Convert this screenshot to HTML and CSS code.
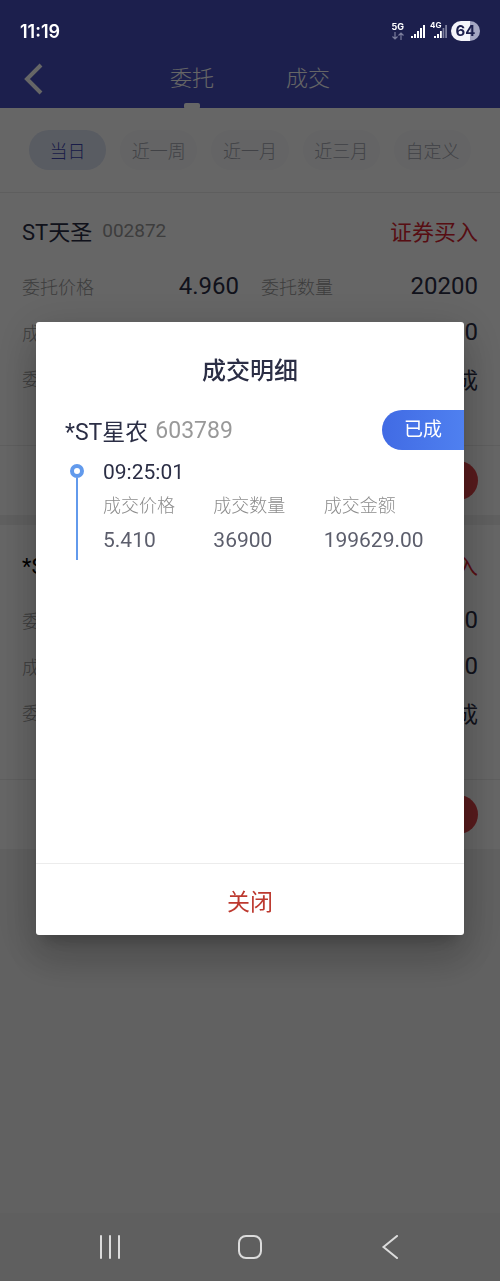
FILE: index.html
```html
<!DOCTYPE html>
<html lang="zh-CN">
<head>
<meta charset="utf-8">
<meta name="viewport" content="width=device-width, initial-scale=1">
<title>成交明细</title>
<link rel="stylesheet" href="styles.css">
</head>
<body>
<div class="page">
  <header class="topbar">
    <button class="back" type="button" aria-label="返回">
      <svg width="20" height="32" viewBox="0 0 20 32"><path d="M17 2 3 16l14 14" fill="none" stroke="currentColor" stroke-width="4"/></svg>
    </button>
    <nav class="tabs">
      <a class="tab tab-active" href="#orders">委托</a>
      <a class="tab" href="#deals">成交</a>
    </nav>
  </header>

  <div class="ranges">
    <button class="chip chip-active" type="button">当日</button>
    <button class="chip" type="button">近一周</button>
    <button class="chip" type="button">近一月</button>
    <button class="chip" type="button">近三月</button>
    <button class="chip" type="button">自定义</button>
  </div>

  <main>
    <article class="order">
      <div class="order-head"><span class="name">ST天圣</span><span class="code">002872</span><span class="side">证券买入</span></div>
      <dl class="facts">
        <div class="fact"><dt>委托价格</dt><dd>4.960</dd></div>
        <div class="fact"><dt>委托数量</dt><dd>20200</dd></div>
        <div class="fact"><dt>成交价格</dt><dd>4.960</dd></div>
        <div class="fact"><dt>成交数量</dt><dd>20200</dd></div>
        <div class="fact fact-wide"><dt>委托状态</dt><dd class="state">已成</dd></div>
      </dl>
      <div class="order-foot"><button class="detail" type="button">明细</button></div>
    </article>
    <article class="order">
      <div class="order-head"><span class="name name-strong">*ST星农</span><span class="code">603789</span><span class="side">证券买入</span></div>
      <dl class="facts">
        <div class="fact"><dt>委托价格</dt><dd>5.410</dd></div>
        <div class="fact"><dt>委托数量</dt><dd>36900</dd></div>
        <div class="fact"><dt>成交价格</dt><dd>5.410</dd></div>
        <div class="fact"><dt>成交数量</dt><dd>36900</dd></div>
        <div class="fact fact-wide"><dt>委托状态</dt><dd class="state">已成</dd></div>
      </dl>
      <div class="order-foot"><button class="detail" type="button">明细</button></div>
    </article>
  </main>
</div>

<div class="overlay">
  <section class="dialog" role="dialog" aria-modal="true" aria-labelledby="dialog-title">
    <h1 class="dialog-title" id="dialog-title">成交明细</h1>
    <div class="dialog-body">
      <div class="stock"><span class="stock-name">*ST星农</span><span class="stock-code">603789</span><span class="badge">已成</span></div>
      <div class="deal">
        <div class="rail"><span class="dot"></span><span class="line"></span></div>
        <div class="deal-info">
          <time class="time">09:25:01</time>
          <dl class="deal-grid">
            <div><dt>成交价格</dt><dd>5.410</dd></div>
            <div><dt>成交数量</dt><dd>36900</dd></div>
            <div><dt>成交金额</dt><dd>199629.00</dd></div>
          </dl>
        </div>
      </div>
    </div>
    <button class="close" type="button">关闭</button>
  </section>
</div>

<div class="status">
  <span class="clock">11:19</span>
  <span class="net">
    <span class="net-label">5G</span>
    <svg width="12" height="8" viewBox="0 0 12 8"><path d="M3 0v7M0.500 4.500 3 7l2.500-2.500M9 8V1M6.500 3.500 9 1l2.500 2.500" fill="none" stroke="#7b7d9c" stroke-width="1.200"/></svg>
  </span>
  <svg class="bars" width="14" height="14" viewBox="0 0 14 14" fill="#fff"><path d="M0 12h2v2H0zM3 10h2v4H3zM6 7h2v7H6zM9 4h2v10H9zM12 1h2v13h-2z"/></svg>
  <span class="second">
    <svg width="17" height="14" viewBox="0 0 17 14"><path d="M4 12h2v2H4zM7 10h2v4H7zM10 7h1.800v7H10z" fill="#fff"/><path d="M12.600 4h1.700v10h-1.700zM15.200 1H17v13h-1.800z" fill="#7b7d9c"/></svg>
    <span class="second-label">4G</span>
  </span>
  <span class="battery">64</span>
</div>

<nav class="sysnav">
  <button type="button" aria-label="最近任务"><svg width="24" height="24" viewBox="0 0 24 24"><path d="M3 1v22M12 1v22M21 1v22"/></svg></button>
  <button type="button" aria-label="主屏幕"><svg width="24" height="24" viewBox="0 0 24 24"><rect x="1" y="1" width="22" height="22" rx="7"/></svg></button>
  <button type="button" aria-label="返回上一页"><svg width="24" height="24" viewBox="0 0 24 24"><path d="M19 1 5.500 12 19 23"/></svg></button>
</nav>
</body>
</html>
```

FILE: styles.css
```css
* { box-sizing: border-box; }

body {
  margin: 0;
  background: #f2f2f2;
  color: #2b2e45;
  font-family: Roboto, "Noto Sans CJK SC", sans-serif;
  font-size: 18px;
}

button {
  margin: 0;
  padding: 0;
  border: 0;
  background: none;
  color: inherit;
  font: inherit;
}

a { color: inherit; text-decoration: none; }
dl, dd { margin: 0; }
svg { display: block; }

.page { min-height: 100vh; }

/* header */
.topbar {
  display: grid;
  grid-template-columns: 1fr auto 1fr;
  align-items: center;
  height: 108px;
  padding: 48px 24px 0;
  background: #464ec0;
  color: #fff;
}

.back { width: 20px; }

.tabs { display: flex; gap: 72px; align-self: stretch; }

.tab {
  position: relative;
  font-size: 22px;
  font-weight: 300;
  line-height: 62px;
}

.tab-active::after {
  content: "";
  position: absolute;
  bottom: 1px;
  left: 14px;
  width: 16px;
  height: 6px;
  border-radius: 2px;
  background: #fff;
}

/* date range chips */
.ranges {
  display: grid;
  grid-template-columns: repeat(5, 1fr);
  gap: 14px;
  padding: 22px 29px;
  border-bottom: 1px solid #ececec;
  background: #fff;
}

.chip {
  height: 40px;
  border-radius: 20px;
  background: #f9fafc;
  color: #a3a5af;
  font-weight: 300;
}

.chip-active { background: #dee5f5; color: #4048b4; }

/* orders */
.order { background: #fff; }
.order + .order { padding-top: 2px; border-top: 10px solid #f0f0f0; }

.order-head {
  display: flex;
  align-items: center;
  height: 70px;
  padding: 4px 22px 0;
  font-size: 22px;
}

.code { margin-left: 10px; color: #999; font-size: 19px; }
.side { margin-left: auto; color: #d92430; }
.name-strong { color: #000; }

.facts {
  display: grid;
  grid-template-columns: 1fr 1fr;
  column-gap: 22px;
  padding: 0 22px 44px;
}

.fact {
  display: flex;
  align-items: center;
  justify-content: space-between;
  height: 46px;
}

.fact-wide { grid-column: 1 / -1; }

.fact dt { color: #999; font-weight: 300; }
.fact dd { font-size: 24px; }
.fact .state { font-size: 22px; }

.order-foot {
  display: flex;
  justify-content: flex-end;
  padding: 15px 22px;
  border-top: 1px solid #ececec;
}

.detail {
  width: 100px;
  height: 39px;
  border-radius: 20px;
  background: #dd4448;
  color: #fff;
}

/* dialog */
.overlay {
  position: fixed;
  inset: 0;
  display: flex;
  align-items: center;
  justify-content: center;
  padding: 0 36px 24px;
  background: rgba(0, 0, 0, 0.6);
}

.dialog {
  flex: 1;
  overflow: hidden;
  border-radius: 3px;
  background: #fff;
  box-shadow: 0 11px 15px -7px rgba(0, 0, 0, 0.2), 0 24px 38px 3px rgba(0, 0, 0, 0.14), 0 9px 46px 8px rgba(0, 0, 0, 0.12);
}

.dialog-title {
  margin: 0;
  padding: 32px 0 22px;
  font-size: 24px;
  font-weight: 500;
  line-height: 34px;
  text-align: center;
}

.dialog-body { min-height: 453px; }

.stock { display: flex; align-items: center; padding-left: 29px; }
.stock-name { font-size: 23px; }
.stock-code { margin-left: 7px; color: #999; font-size: 23px; }

.badge {
  width: 82px;
  margin-left: auto;
  border-radius: 20px 0 0 20px;
  background: linear-gradient(90deg, #416be4, #4f80f0);
  color: #fff;
  font-size: 19px;
  line-height: 40px;
  text-align: center;
}

.deal {
  display: flex;
  gap: 19px;
  padding: 5px 30px 0 34px;
}

.rail {
  display: flex;
  flex-direction: column;
  align-items: center;
  padding-top: 9px;
}

.dot {
  width: 14px;
  height: 14px;
  border: 4px solid #629aec;
  border-radius: 50%;
}

.line { flex: 1; width: 2px; background: #629aec; }

.deal-info {
  flex: 1;
  padding-bottom: 3px;
  font-size: 21px;
  line-height: 34px;
}

.time { display: block; }
.deal-grid { display: grid; grid-template-columns: repeat(3, 1fr); }
.deal-grid dt { color: #8c8c8c; font-size: 18px; font-weight: 300; }
.deal-grid dd { color: #5c5e6c; }

.close {
  width: 100%;
  height: 72px;
  border-top: 1px solid #ececec;
  color: #bd392f;
  font-size: 23px;
}

/* system bars */
.status {
  position: fixed;
  inset: 0 0 auto;
  display: flex;
  align-items: center;
  height: 62px;
  padding: 0 20px;
  color: #fff;
}

.clock { margin-right: auto; font-family: Inter, sans-serif; font-weight: 600; }

.net { display: grid; justify-items: center; gap: 1px; }

.net-label, .second-label {
  font-family: Inter, sans-serif;
  font-size: 9px;
  font-weight: 700;
  line-height: 9px;
}

.bars { margin-left: 7px; }
.second { position: relative; margin-left: 5px; }
.second-label { position: absolute; top: -3px; left: 0; font-size: 8px; }

.battery {
  width: 29px;
  margin-left: 4px;
  border-radius: 10px;
  background: linear-gradient(90deg, #f4f4fa 64%, #a4a6c2 64%);
  color: #1c1f4d;
  font-family: Inter, sans-serif;
  font-size: 15px;
  font-weight: 700;
  line-height: 20px;
  text-align: center;
}

.sysnav {
  position: fixed;
  inset: auto 0 0;
  display: flex;
  justify-content: space-between;
  height: 68px;
  padding: 0 98px;
  background: rgba(0, 0, 0, 0.02);
}

.sysnav svg { fill: none; stroke: #dcdcdc; stroke-width: 2; stroke-linecap: round; }
```
